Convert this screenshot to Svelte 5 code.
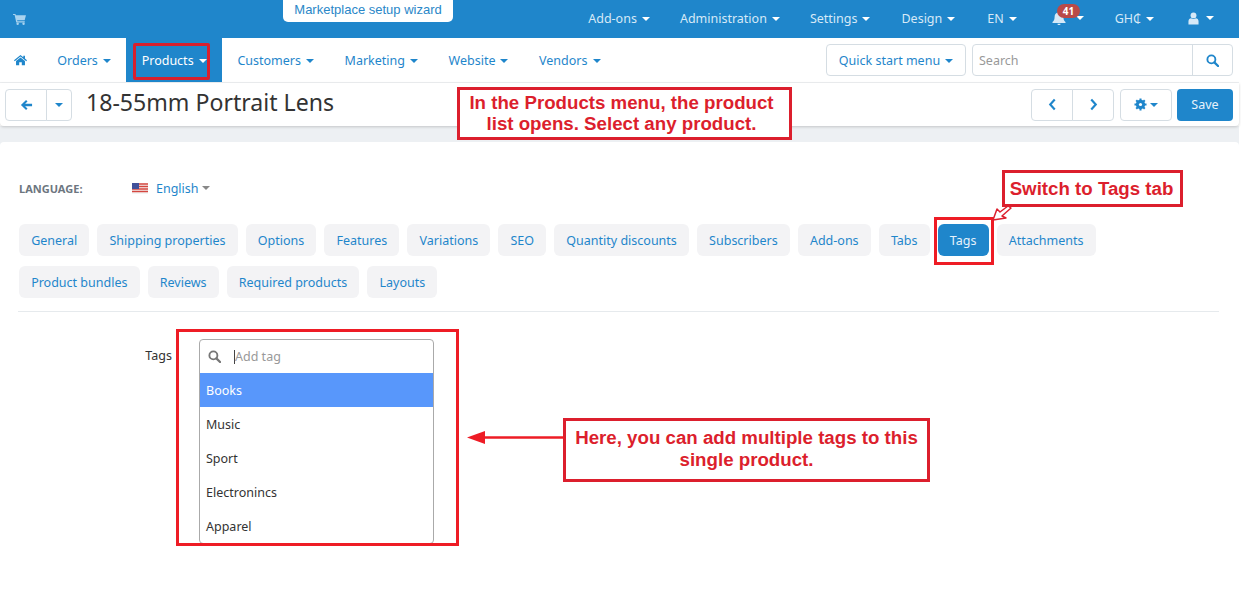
<script>
  const topMenu = ['Add-ons', 'Administration', 'Settings', 'Design', 'EN'];
  const navMenu = ['Customers', 'Marketing', 'Website', 'Vendors'];
  const tabsRow1 = ['General', 'Shipping properties', 'Options', 'Features', 'Variations', 'SEO', 'Quantity discounts', 'Subscribers', 'Add-ons', 'Tabs', 'Tags', 'Attachments'];
  const tabsRow2 = ['Product bundles', 'Reviews', 'Required products', 'Layouts'];
  const tags = ['Books', 'Music', 'Sport', 'Electronincs', 'Apparel'];
</script>

{#snippet searchIcon()}
  <svg class="ico" viewBox="0 0 14 14" width="13" height="13"><circle cx="5.8" cy="5.8" r="4.3" fill="none" stroke="currentColor" stroke-width="2"/><path d="M9 9l4 4" stroke="currentColor" stroke-width="2.4" stroke-linecap="round"/></svg>
{/snippet}

<div class="page">
  <div class="app">
    <header class="topbar">
      <svg class="cart" viewBox="0 0 14 13" width="13" height="12"><path d="M0 1h2.6l.4 1.4H14l-1.4 5.400H4.400l.3 1.200h8v1.200H3.500L1.700 2.200H0z" fill="#a9d3ef"/><circle cx="5" cy="11.600" r="1.300" fill="#a9d3ef"/><circle cx="11.400" cy="11.600" r="1.300" fill="#a9d3ef"/></svg>
      <div class="wizard">Marketplace setup wizard</div>
      <div class="top-right">
        {#each topMenu as item}
          <span class="top-item">{item}<i class="caret"></i></span>
        {/each}
        <span class="top-item bell">
          <svg viewBox="0 0 14 14" width="14" height="14"><path d="M7 0.500c.6 0 1 .4 1 1 2.200.4 3.400 2.200 3.400 4.400 0 3 1 4 2.100 5v1H.5v-1c1.100-1 2.100-2 2.100-5C2.600 3.700 3.800 1.900 6 1.500c0-.6.400-1 1-1zM5.500 12.800h3a1.500 1.500 0 0 1-3 0z" fill="#d6e9f7"/></svg>
          <b class="badge">41</b>
          <i class="caret"></i>
        </span>
        <span class="top-item ghc">GH₵<i class="caret"></i></span>
        <span class="top-item user">
          <svg viewBox="0 0 12 14" width="11" height="13"><circle cx="6" cy="3.600" r="3.200" fill="#d6e9f7"/><path d="M0.500 13.500V10c0-2 1.500-3.200 2.800-3.200 1.500 1 3.900 1 5.400 0 1.300 0 2.800 1.200 2.800 3.200v3.500z" fill="#d6e9f7"/></svg>
          <i class="caret"></i>
        </span>
      </div>
    </header>

    <nav class="navbar">
      <svg class="home" viewBox="0 0 14 12" width="13" height="12"><path d="M7 .5l3 2.500V1.300h1.800v3.200L14 6.400l-.8.900L7 2.200.8 7.300 0 6.400zM2.200 7.200L7 3.400l4.800 3.800V11.700H8.400V8.300H5.600v3.400H2.200z" fill="#1f86cb"/></svg>
      <span class="nav-item orders">Orders<i class="caret"></i></span>
      <span class="nav-item active">Products<i class="caret"></i></span>
      {#each navMenu as item}
        <span class="nav-item">{item}<i class="caret"></i></span>
      {/each}
      <div class="nav-right">
        <button class="quick">Quick start menu<i class="caret"></i></button>
        <div class="search">
          <span class="search-text">Search</span>
          <span class="search-btn">{@render searchIcon()}</span>
        </div>
      </div>
    </nav>

    <div class="toolbar">
      <div class="btn-group">
        <span class="tool-btn back">
          <svg viewBox="0 0 14 12" width="13" height="12"><path d="M6.500.5L1 6l5.500 5.500 1.600-1.600L5.500 7.300H13V4.700H5.500l2.600-2.600z" fill="#1f86cb"/></svg>
        </span>
        <span class="tool-btn drop"><i class="caret"></i></span>
      </div>
      <h1>18-55mm Portrait Lens</h1>
      <div class="tool-right">
        <div class="btn-group">
          <span class="tool-btn pager"><svg viewBox="0 0 10 14" width="9" height="13"><path d="M7.500 1.500L2.500 7l5 5.500" fill="none" stroke="#1f86cb" stroke-width="2.400"/></svg></span>
          <span class="tool-btn pager"><svg viewBox="0 0 10 14" width="9" height="13"><path d="M2.500 1.500l5 5.500-5 5.500" fill="none" stroke="#1f86cb" stroke-width="2.400"/></svg></span>
        </div>
        <span class="tool-btn gear">
          <svg viewBox="0 0 14 14" width="13" height="13"><circle cx="7" cy="7" r="3.600" fill="none" stroke="#1f86cb" stroke-width="2.800"/><path d="M7 .5v13M.5 7h13M2.400 2.400l9.200 9.200M11.600 2.400l-9.200 9.200" stroke="#1f86cb" stroke-width="2.200"/><circle cx="7" cy="7" r="1.700" fill="#fff"/></svg>
          <i class="caret"></i>
        </span>
        <span class="save">Save</span>
      </div>
    </div>

    <div class="content">
      <main class="panel">
        <div class="lang">
          <span class="lang-label">LANGUAGE:</span>
          <svg class="flag" viewBox="0 0 16 11" width="16" height="11"><rect width="16" height="11" fill="#f4f4f4"/><path d="M0 1h16M0 3.500h16M0 6h16M0 8.500h16" stroke="#d4463f" stroke-width="1.300"/><rect width="7" height="6" fill="#41519b"/></svg>
          <span class="lang-value">English</span><i class="caret gray"></i>
        </div>

        <div class="tabs">
          {#each tabsRow1 as tab}
            <span class="tab" class:current={tab === 'Tags'}>{tab}</span>
          {/each}
        </div>
        <div class="tabs second">
          {#each tabsRow2 as tab}
            <span class="tab">{tab}</span>
          {/each}
        </div>
        <hr />

        <div class="field">
          <span class="field-label">Tags</span>
          <div class="select">
            <div class="select-input">
              <span class="select-icon">{@render searchIcon()}</span>
              <span class="cursor"></span>
              <span class="placeholder">Add tag</span>
            </div>
            {#each tags as tag, i}
              <div class="option" class:hl={i === 0}>{tag}</div>
            {/each}
          </div>
        </div>
      </main>
    </div>
  </div>

  <!-- screenshot annotations on top of the page -->
  <div class="mark mark-products"></div>
  <div class="mark mark-tab"></div>
  <div class="mark mark-select"></div>
  <div class="note note-products">In the Products menu, the product<br />list opens. Select any product.</div>
  <div class="note note-tab">Switch to Tags tab</div>
  <div class="note note-here">Here, you can add multiple tags to this<br />single product.</div>
  <svg class="arrows" width="1241" height="615" viewBox="0 0 1241 615">
    <path d="M564 437.500H482" stroke="#ee1c25" stroke-width="2.500"/>
    <path d="M467 437.500l18-6.500v13z" fill="#ee1c25"/>
    <path d="M993 220l4-11 3 3 8-6 3 2-9 8 4 2z" fill="#fff" stroke="#dc1f2d" stroke-width="1.500" stroke-linejoin="round"/>
  </svg>
</div>

<style>
  :global(body) {
    margin: 0;
    background: #fff;
  }

  .page {
    position: relative;
    width: 1241px;
    height: 615px;
    overflow: hidden;
    font-family: "Noto Sans", "Open Sans", sans-serif;
    font-size: 12.500px;
    color: #333;
  }

  .app {
    width: 1239px;
  }

  .caret {
    display: inline-block;
    width: 0;
    height: 0;
    margin-left: 5px;
    vertical-align: 2px;
    border-left: 4px solid transparent;
    border-right: 4px solid transparent;
    border-top: 4px solid currentColor;
  }

  .caret.gray {
    margin-left: 3px;
    color: #888;
  }

  .topbar {
    position: relative;
    display: flex;
    align-items: center;
    height: 38px;
    padding-left: 13px;
    background: #1f86cb;
    color: #d6e9f7;
  }

  .wizard {
    position: absolute;
    left: 283px;
    top: 0;
    width: 170px;
    height: 22px;
    line-height: 20px;
    text-align: center;
    background: #fff;
    color: #2a87c8;
    font-family: "Liberation Sans", sans-serif;
    font-size: 13px;
    border-radius: 0 0 5px 5px;
  }

  .top-right {
    display: flex;
    align-items: center;
    margin-left: auto;
    padding: 0 25px 2px 0;
    gap: 30px;
  }

  .top-item {
    position: relative;
    white-space: nowrap;
  }

  .top-item:nth-child(4) {
    margin-left: 1px;
  }

  .top-item:nth-child(5) {
    margin-left: 2px;
  }

  .top-item .caret {
    color: #fff;
  }

  .bell,
  .user {
    display: flex;
    align-items: center;
  }

  .bell {
    margin-left: 5px;
  }

  .bell .caret {
    margin-left: 10px;
  }

  .ghc {
    margin-left: 1px;
  }

  .user {
    margin-left: 4px;
  }

  .user .caret {
    margin-left: 7px;
  }

  .badge {
    position: absolute;
    left: 5px;
    top: -7px;
    padding: 0 6px;
    height: 14px;
    line-height: 14px;
    font-size: 10px;
    color: #fff;
    background: #b94a48;
    border-radius: 8px;
  }

  .navbar {
    display: flex;
    align-items: stretch;
    height: 44px;
    padding-left: 14px;
    background: #fff;
    color: #1f86cb;
    border-bottom: 1px solid #eef0f2;
  }

  .home {
    align-self: center;
    margin-right: 15px;
  }

  .nav-item {
    display: flex;
    align-items: center;
    padding: 0 15.300px;
    white-space: nowrap;
  }

  .nav-item .caret {
    margin-top: 2px;
  }

  .active {
    padding: 0 15.500px;
    background: #1f86cb;
    color: #fff;
  }

  .nav-right {
    display: flex;
    align-items: center;
    gap: 6px;
    margin-left: auto;
    padding-right: 6px;
  }

  .quick {
    width: 140px;
    height: 32px;
    padding: 0;
    font: inherit;
    color: #1f86cb;
    background: #fff;
    border: 1px solid #d5dde3;
    border-radius: 4px;
  }

  .search {
    display: flex;
    width: 261px;
    height: 32px;
    box-sizing: border-box;
    border: 1px solid #d5dde3;
    border-radius: 4px;
  }

  .search-text {
    flex: 1;
    padding-left: 6px;
    line-height: 32px;
    color: #999;
  }

  .search-btn {
    display: flex;
    align-items: center;
    justify-content: center;
    width: 39px;
    border-left: 1px solid #d5dde3;
  }

  .ico {
    display: block;
  }

  .toolbar {
    position: relative;
    display: flex;
    align-items: center;
    height: 43px;
    padding: 0 6px 0 5px;
    background: #fff;
    border-radius: 0 0 4px 4px;
    box-shadow: 0 1px 3px rgba(0, 0, 0, 0.18);
    color: #1f86cb;
  }

  .btn-group {
    display: flex;
  }

  .tool-btn {
    display: flex;
    align-items: center;
    justify-content: center;
    height: 32px;
    box-sizing: border-box;
    border: 1px solid #d5dde3;
    background: #fff;
  }

  .back {
    width: 42px;
    border-radius: 4px 0 0 4px;
  }

  .drop {
    width: 26px;
    margin-left: -1px;
    border-radius: 0 4px 4px 0;
  }

  .drop .caret {
    margin-left: 0;
    vertical-align: middle;
  }

  h1 {
    margin: 0 0 5px 14px;
    font-size: 23.100px;
    font-weight: 400;
    color: #333;
  }

  .tool-right {
    display: flex;
    align-items: center;
    gap: 6px;
    margin-left: auto;
  }

  .pager {
    width: 42px;
  }

  .pager:first-child {
    border-radius: 4px 0 0 4px;
  }

  .pager:last-child {
    margin-left: -1px;
    border-radius: 0 4px 4px 0;
  }

  .gear {
    width: 52px;
    margin-right: -1px;
    border-radius: 4px;
  }

  .gear .caret {
    margin-left: 3px;
  }

  .save {
    width: 56px;
    height: 32px;
    line-height: 32px;
    text-align: center;
    color: #e6f2fb;
    background: #1f86cb;
    border-radius: 4px;
  }

  .content {
    padding-top: 16px;
    background: #edf0f3;
  }

  .panel {
    height: 473px;
    padding: 38px 20px 0 18px;
    box-sizing: border-box;
    background: #fff;
    border-radius: 4px 4px 0 0;
  }

  .lang {
    display: flex;
    align-items: center;
    height: 16px;
  }

  .lang-label {
    width: 114px;
    padding-left: 1px;
    margin-right: -1px;
    font-size: 11px;
    font-weight: 700;
    color: #6d7680;
  }

  .flag {
    margin-right: 8px;
  }

  .lang-value {
    color: #1f86cb;
  }

  .tabs {
    display: flex;
    gap: 8px;
    margin-top: 28px;
    margin-left: 1px;
  }

  .tabs.second {
    margin-top: 10px;
  }

  .tab {
    height: 32px;
    line-height: 34px;
    padding: 0 12.150px;
    white-space: nowrap;
    color: #1f86cb;
    background: #f3f3f5;
    border-radius: 6px;
  }

  .tab.current {
    color: #e6f2fb;
    background: #1f86cb;
  }

  hr {
    height: 1px;
    margin: 13px 0 0 0;
    border: 0;
    background: #e6eaed;
  }

  .field {
    display: flex;
    margin-top: 27px;
  }

  .field-label {
    width: 154px;
    padding-top: 8px;
    text-align: right;
    color: #333;
  }

  .select {
    width: 235px;
    margin-left: 27px;
    box-sizing: border-box;
    border: 1px solid #aaa;
    border-radius: 4px;
    overflow: hidden;
  }

  .select-input {
    display: flex;
    align-items: center;
    height: 33px;
    color: #777;
  }

  .select-icon {
    margin-left: 8px;
  }

  .cursor {
    width: 1px;
    height: 14px;
    margin-left: 13px;
    background: #444;
  }

  .placeholder {
    color: #999;
  }

  .option {
    height: 34px;
    line-height: 36px;
    padding-left: 6px;
  }

  .option.hl {
    color: #fff;
    background: #5897fb;
  }

  .mark {
    position: absolute;
    box-sizing: border-box;
    border: 3px solid #ee1c25;
  }

  .mark-products {
    left: 133px;
    top: 43px;
    width: 77px;
    height: 37px;
    border-color: #d8202e;
    border-radius: 2px;
  }

  .mark-tab {
    left: 934px;
    top: 217px;
    width: 60px;
    height: 48px;
  }

  .mark-select {
    left: 176px;
    top: 329px;
    width: 283px;
    height: 217px;
  }

  .note {
    position: absolute;
    box-sizing: border-box;
    border: 3px solid #dc1f2d;
    background: #fff;
    color: #dc1f2d;
    font-family: "Liberation Sans", sans-serif;
    font-size: 18.700px;
    font-weight: 700;
    text-align: center;
    white-space: nowrap;
  }

  .note-products {
    left: 457px;
    top: 87px;
    width: 335px;
    height: 53px;
    padding: 2px 6px 0 0;
    line-height: 21px;
  }

  .note-tab {
    left: 1002px;
    top: 170px;
    width: 181px;
    height: 37px;
    padding-right: 2px;
    line-height: 31px;
  }

  .note-here {
    left: 563px;
    top: 418px;
    width: 367px;
    height: 64px;
    padding-top: 6px;
    line-height: 22px;
  }

  .arrows {
    position: absolute;
    left: 0;
    top: 0;
    pointer-events: none;
  }
</style>
